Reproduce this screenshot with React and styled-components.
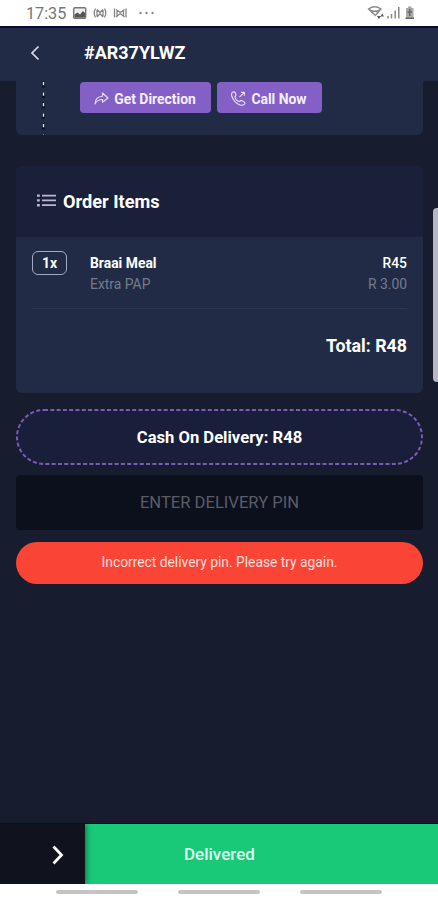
import React from "react";
import styled, { createGlobalStyle } from "styled-components";

const App = () => {
  return (
    <Screen>
      <GlobalStyle />
      <StatusBar>
        <Clock>17:35</Clock>
        <StatusIcons />
        <SignalIcons />
      </StatusBar>
      <Header>
        <BackButton aria-label="Back">
          <svg width="10" height="16" viewBox="0 0 10 16">
            <path d="M8.5 1.5 L2 8 L8.5 14.5" fill="none" stroke="#d9dce8" strokeWidth="1.7" />
          </svg>
        </BackButton>
        <Title>#AR37YLWZ</Title>
      </Header>
      <Content>
        <AddressCard>
          <Route />
          <Actions>
            <ActionButton $width={131}>
              <DirectionIcon />
              <Label $size={13.9} $weight={700}>Get Direction</Label>
            </ActionButton>
            <ActionButton $width={105}>
              <CallIcon />
              <Label $size={13.9} $weight={700}>Call Now</Label>
            </ActionButton>
          </Actions>
        </AddressCard>
        <OrderCard>
          <OrderHeader>
            <ListIcon />
            <Label $size={18.2} $weight={700}>Order Items</Label>
          </OrderHeader>
          <OrderBody>
            <Item>
              <Quantity>1x</Quantity>
              <ItemLines>
                <ItemLine>
                  <Label $size={13.9} $weight={700}>Braai Meal</Label>
                  <Label $size={13.9} $weight={500}>R45</Label>
                </ItemLine>
                <ItemLine $muted>
                  <Label $size={13.9}>Extra PAP</Label>
                  <Label $size={13.9}>R 3.00</Label>
                </ItemLine>
              </ItemLines>
            </Item>
            <Total>
              <Label $size={17.8} $weight={700}>Total: R48</Label>
            </Total>
          </OrderBody>
        </OrderCard>
        <Payment>
          <Outline />
          <Label $size={16.6} $weight={700}>Cash On Delivery: R48</Label>
        </Payment>
        <PinInput placeholder="ENTER DELIVERY PIN" />
        <ErrorMessage>
          <Label $size={13.8}>Incorrect delivery pin. Please try again.</Label>
        </ErrorMessage>
      </Content>
      <SwipeBar>
        <Handle>
          <svg width="12" height="20" viewBox="0 0 12 20">
            <path d="M1.5 1.5 L9.5 10 L1.5 18.5" fill="none" stroke="#fff" strokeWidth="2.8" />
          </svg>
        </Handle>
        <SwipeLabel>Delivered</SwipeLabel>
      </SwipeBar>
      <NavBar>
        <NavLine />
        <NavLine />
        <NavLine />
      </NavBar>
      <EdgePanel />
    </Screen>
  );
};

const StatusIcons = () => (
  <svg width="84" height="16" viewBox="0 0 84 16">
    <rect x="0.7" y="2.7" width="12" height="10.6" rx="1.2" fill="#eee" stroke="#777" strokeWidth="1.4" />
    <path d="M1.5 12.5 V9.5 L4.5 7.5 L7 9.5 L10 6 L12 8 V12.5 Z" fill="#555" />
    <g fill="none" stroke="#858585" strokeWidth="1.3">
      <path d="M22.5 3.5 Q20 8 22.5 12.5 M31.5 3.5 Q34 8 31.5 12.5 M24 4.5 L27 7.5 L30 4.5 M24 12 L27 8.5 L30 12 M24 5 V11.5 M30 5 V11.5" />
      <path d="M41.5 3.5 V12.5 M53 3.5 V12.5 M43 4.5 L47.3 7.5 L51.5 4.5 M43 12 L47.3 8.5 L51.5 12 M44 5 V11.5 M50.5 5 V11.5" />
    </g>
    <g fill="#888">
      <circle cx="67.5" cy="8" r="1.2" />
      <circle cx="73.5" cy="8" r="1.2" />
      <circle cx="79.5" cy="8" r="1.2" />
    </g>
  </svg>
);

const SignalIcons = () => (
  <Signal width="48" height="16" viewBox="0 0 48 16">
    <g fill="none" stroke="#8b8b8b" strokeWidth="1.3">
      <path d="M1.5 4 Q7.5 -0.5 14 4 L8.5 10.5 Z" />
      <path d="M2.5 4.5 Q7.5 8 13 4.5 M4.5 7.5 Q7.5 5 11 7.5" />
    </g>
    <path d="M10 11 h4 l-2 3 z M13.5 11.5 l1.7 -3 l1.7 3 z" fill="#555" />
    <path d="M21 11 V13.5 M24.5 9 V13.5 M28.2 5.5 V13.5 M31.8 2 V13.5" stroke="#888" strokeWidth="1.5" />
    <path d="M39 3 h2 v-1.5 h3.5 v1.5 h2 v11 h-7.5 z" fill="#a8a8a8" />
    <path d="M42.7 4 V11 M40.5 7 h4.5 M38.5 13.2 h8.5" stroke="#666" strokeWidth="1.4" />
  </Signal>
);

const DirectionIcon = () => (
  <svg width="15" height="13" viewBox="0 0 15 13">
    <path
      d="M1 12 C1.2 7.5 3.5 4.5 8.5 4.3 V1 L14 6 L8.5 10.2 V7.5 C5 7.5 2.5 9 1 12 Z"
      fill="none"
      stroke="#e8dcfb"
      strokeWidth="1.1"
      strokeLinejoin="round"
    />
  </svg>
);

const CallIcon = () => (
  <svg width="15" height="15" viewBox="0 0 15 15">
    <g fill="none" stroke="#eadffb" strokeWidth="1.1" strokeLinejoin="round">
      <path d="M1.3 1.4 C2.6 0.5 3.6 0.7 4.4 2.2 C5.2 3.8 5 4.9 3.9 5.8 C4.3 7.7 6.2 9.9 8.4 10.6 C9.4 9.4 10.6 9.3 12.4 10.4 C14.2 11.5 14.3 12.4 13.2 13.4 C11.2 15.2 7 14 4 10.6 C0.8 7 -0.3 3 1.3 1.4 Z" />
      <path d="M8.5 6.2 L13 1.6 M10 1.4 H13.4 V4.8" />
    </g>
  </svg>
);

const ListIcon = () => (
  <svg width="19" height="13" viewBox="0 0 19 13">
    <path d="M5 1.6 H19 M5 6.4 H19 M5 11.2 H19" stroke="#bcb7d2" strokeWidth="1.7" />
    <path d="M0 1.6 H2.8 M0 6.4 H2.8 M0 11.2 H2.8" stroke="#bcb7d2" strokeWidth="2.4" />
  </svg>
);

const Route = () => (
  <RouteLine width="4" height="54" viewBox="0 0 4 54">
    <path d="M1.5 0 V54" stroke="#0b1228" strokeWidth="3" strokeDasharray="6 4.5" strokeDashoffset="-0.5" />
    <path d="M1.5 0 V54" stroke="#e6eaf2" strokeWidth="1.4" strokeDasharray="3.2 7.3" strokeDashoffset="-1" />
  </RouteLine>
);

const Outline = () => (
  <PaymentOutline width="407" height="56" viewBox="0 0 407 56">
    <rect x="1" y="1" width="405" height="54" rx="27" fill="#191e3b" stroke="#7a5bb8" strokeWidth="2" strokeDasharray="4 2.3" />
  </PaymentOutline>
);

const GlobalStyle = createGlobalStyle`
  * {
    box-sizing: border-box;
  }
  body {
    margin: 0;
    font-family: Roboto, sans-serif;
    background: #171c2f;
  }
  button, input {
    font-family: inherit;
  }
  svg {
    display: block;
    flex-shrink: 0;
  }
`;

const Screen = styled.div`
  position: relative;
  display: flex;
  flex-direction: column;
  width: 438px;
  height: 900px;
  overflow: hidden;
  color: #fff;
  background: #171c2f;
`;

const StatusBar = styled.div`
  display: flex;
  align-items: center;
  gap: 7px;
  height: 26px;
  padding: 0 23px 0 26px;
  background: #fff;
`;

const Clock = styled.span`
  width: 40px;
  padding-top: 2px;
  color: #777;
  font-size: 16.2px;
  line-height: 26px;
`;

const Signal = styled.svg`
  margin-left: auto;
`;

const Header = styled.header`
  display: flex;
  align-items: center;
  height: 55px;
  padding: 0 30px 3px;
  border-top: 2px solid #0b0b35;
  background: #212b45;
`;

const BackButton = styled.button`
  width: 54px;
  padding: 0 0 1px;
  border: none;
  background: transparent;
`;

const Title = styled.h1`
  margin: 0;
  font-size: 18px;
  font-weight: 700;
  line-height: 22px;
`;

const Label = styled.span`
  font-size: ${({ $size }) => $size}px;
  font-weight: ${({ $weight }) => $weight || 400};
  white-space: nowrap;
`;

const Content = styled.main`
  display: flex;
  flex-direction: column;
  flex: 1;
  padding: 0 15px 0 16px;
`;

const AddressCard = styled.section`
  display: flex;
  height: 54px;
  padding-left: 26px;
  border-radius: 0 0 6px 6px;
  background: #212b45;
`;

const RouteLine = styled.svg`
  width: 4px;
`;

const Actions = styled.div`
  display: flex;
  gap: 6px;
  padding: 1px 0 0 34px;
`;

const ActionButton = styled.button`
  display: flex;
  align-items: center;
  justify-content: center;
  gap: 5px;
  width: ${({ $width }) => $width}px;
  height: 31px;
  padding: 2px 1px 0 0;
  border: none;
  border-radius: 4px;
  color: #f5f0ff;
  background: #8460c6;
`;

const OrderCard = styled.section`
  height: 227px;
  margin-top: 31px;
  border-radius: 6px;
  overflow: hidden;
  background: #212b45;
`;

const OrderHeader = styled.div`
  display: flex;
  align-items: center;
  gap: 7px;
  height: 71px;
  padding: 0 21px;
  background: #1a1f3a;

  svg {
    margin-top: -2px;
  }
`;

const OrderBody = styled.div`
  padding: 14px 16px;
`;

const Item = styled.div`
  display: flex;
  height: 58px;
  border-bottom: 1px solid #2b3650;
`;

const Quantity = styled.div`
  display: flex;
  align-items: center;
  justify-content: center;
  width: 35px;
  height: 24px;
  border: 1.5px solid #a2a9c2;
  border-radius: 6px;
  font-size: 14px;
  font-weight: 700;
`;

const ItemLines = styled.div`
  flex: 1;
  padding: 2px 0 0 23px;
`;

const ItemLine = styled.div`
  display: flex;
  justify-content: space-between;
  line-height: 21px;
  color: ${({ $muted }) => ($muted ? "#747b8e" : "#fff")};
`;

const Total = styled.div`
  display: flex;
  justify-content: flex-end;
  padding-top: 25px;
  line-height: 24px;
`;

const Payment = styled.div`
  position: relative;
  display: flex;
  align-items: center;
  justify-content: center;
  height: 56px;
  margin-top: 16px;
`;

const PaymentOutline = styled.svg`
  position: absolute;
  inset: 0;

  & + span {
    position: relative;
  }
`;

const PinInput = styled.input`
  height: 55px;
  margin-top: 10px;
  padding: 0;
  border: none;
  border-radius: 4px;
  color: #fff;
  font-size: 16.6px;
  text-align: center;
  background: #0c101c;

  &::placeholder {
    color: #5a5d67;
  }
`;

const ErrorMessage = styled.div`
  display: flex;
  align-items: center;
  justify-content: center;
  height: 42px;
  margin-top: 12px;
  padding-bottom: 2px;
  border-radius: 21px;
  color: #ffe0dc;
  background: #f94436;
`;

const SwipeBar = styled.div`
  display: flex;
  height: 61px;
  border-top: 1px solid #08091e;
  background: #1ac978;
`;

const Handle = styled.div`
  display: flex;
  align-items: center;
  width: 85px;
  padding: 1px 0 0 52px;
  background: #10121e;
  box-shadow: 1px 0 6px rgba(0, 40, 30, 0.6);
`;

const SwipeLabel = styled.div`
  padding-left: 99px;
  color: #dcfff0;
  font-size: 17px;
  font-weight: 500;
  line-height: 60px;
`;

const NavBar = styled.div`
  display: flex;
  gap: 40px;
  height: 16px;
  padding: 6px 56px 0;
  background: #fff;
`;

const NavLine = styled.div`
  width: 82px;
  height: 4px;
  border-radius: 2px;
  background: #c4c4c4;
`;

const EdgePanel = styled.div`
  position: absolute;
  top: 208px;
  right: 0;
  width: 5px;
  height: 174px;
  border-radius: 4px 0 0 4px;
  background: #b9b7c5;
`;

export default App;
